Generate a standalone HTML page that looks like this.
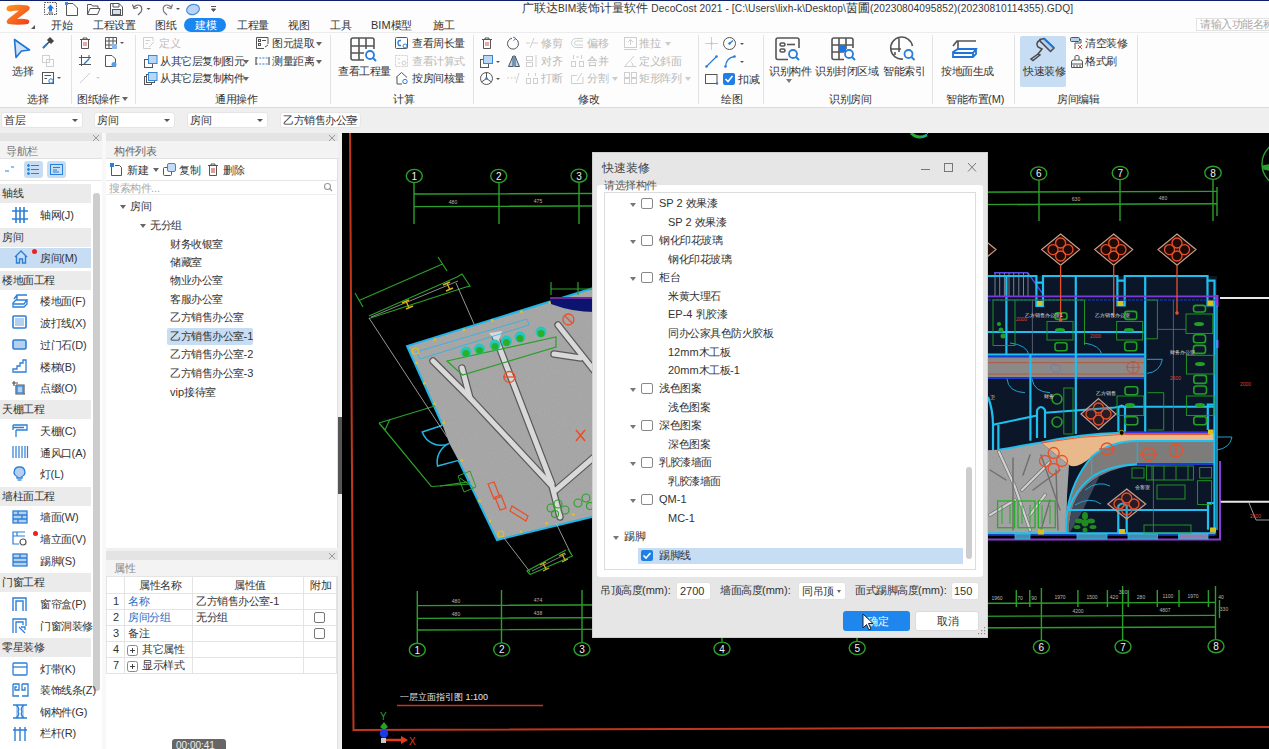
<!DOCTYPE html>
<html><head><meta charset="utf-8">
<style>
*{box-sizing:border-box}
html,body{margin:0;padding:0}
body{width:1269px;height:749px;overflow:hidden;position:relative;background:#efefef;font-family:"Liberation Sans",sans-serif;font-size:11px;color:#333}
.a{position:absolute}
.t{position:absolute;white-space:nowrap;font-size:11px;line-height:13px;color:#333}
.c{font-size:13px;letter-spacing:0.5px;-webkit-text-stroke:0.25px}
.g{color:#b9b9b9}
.sep{position:absolute;top:35px;width:1px;height:69px;background:#e3e3e3}
.cb{position:absolute;top:112px;height:16px;background:#fff;border-radius:3px;border:1px solid #e6e6e6}
.cb .arr{position:absolute;right:4px;top:6px;width:0;height:0;border-left:3px solid transparent;border-right:3px solid transparent;border-top:3px solid #555}
.hdr{position:absolute;height:8px;background:#e4e4e4}
.x{position:absolute;color:#999;font-size:10px;line-height:8px}
.sec{position:absolute;left:0;width:91px;height:19px;background:#ebebeb}
.tri{position:absolute;width:0;height:0;border-left:3px solid transparent;border-right:3px solid transparent;border-top:4px solid #666}
svg{position:absolute;overflow:visible}
body.cjk .c{font-size:10.5px!important;letter-spacing:-0.5px!important;-webkit-text-stroke:0!important}
body.cjk .ct{font-size:12px!important;letter-spacing:0!important}
body.cjk .cti{font-size:11.5px!important;letter-spacing:0!important}
</style></head><body>

<!-- title bar + tabs -->
<div class="a" style="left:0;top:0;width:1269px;height:32px;background:#fdfdfd"></div>
<div class="a" style="left:0;top:0;width:1269px;height:1px;background:#0f1f6a"></div>
<div class="t" style="left:522px;top:2px;font-size:10.2px;letter-spacing:0.08px;color:#3a3a3a"><span class="c cti" style="font-size:12.5px">广联达</span>BIM<span class="c cti" style="font-size:12.5px">装饰计量软件</span> DecoCost 2021 - [C:\Users\lixh-k\Desktop\<span class="c cti" style="font-size:12.5px">茵圃</span>(20230804095852)(20230810114355).GDQ]</div>
<div class="a" style="left:1196px;top:18px;width:80px;height:13px;border:1px solid #e2e2e2;background:#fff"></div>
<div class="t c" style="left:1200px;top:18px;color:#a8a8a8">请输入功能名称</div>

<!-- tabs -->
<div class="a" style="left:184px;top:18px;width:42px;height:14px;border-radius:7px;background:#1a86f0"></div>
<div class="t c" style="left:51px;top:19px">开始</div>
<div class="t c" style="left:93px;top:19px">工程设置</div>
<div class="t c" style="left:155px;top:19px">图纸</div>
<div class="t c" style="left:195px;top:19px;color:#fff">建模</div>
<div class="t c" style="left:237px;top:19px">工程量</div>
<div class="t c" style="left:288px;top:19px">视图</div>
<div class="t c" style="left:330px;top:19px">工具</div>
<div class="t" style="left:371px;top:19px">BIM<span class="c">模型</span></div>
<div class="t c" style="left:433px;top:19px">施工</div>

<!-- ribbon -->
<div class="a" style="left:0;top:32px;width:1269px;height:76px;background:#fdfdfd;border-top:1px solid #ececec;border-bottom:1px solid #dcdcdc"></div>

<!-- logo & quick access -->
<svg style="left:5px;top:3px" width="27" height="23" viewBox="0 0 27 23"><defs><linearGradient id="lg" x1="0" y1="0" x2="1" y2="1"><stop offset="0" stop-color="#ff9a20"/><stop offset="1" stop-color="#f03a1a"/></linearGradient></defs><path d="M4 2.5 Q13 1 22.5 2.5 Q26.5 4 23.5 7.5 L12 16 Q18 15.5 22.5 16.5 Q26 18 23 21 Q13 22.5 3.5 21 Q0 19.5 3 16 L14 7.5 Q9 7.5 5 8.5 Q1 8 1.5 5 Q2 3 4 2.5Z" fill="url(#lg)"/></svg>
<svg style="left:31px;top:25px" width="4" height="4"><path d="M4 0V4H0Z" fill="#555"/></svg>
<svg style="left:44px;top:2px" width="175" height="14" viewBox="0 0 175 14" fill="none" stroke="#555" stroke-width="1">
<rect x="0.5" y="0.5" width="12" height="12" stroke-dasharray="1.5 1"/><path d="M6.5 2.5 L3 6.5 H5 V9.5 H8 V6.5 H10Z" fill="#1a7ae6" stroke="none"/><path d="M4 11 H9" stroke="#555"/>
<path d="M22.5 1.5 H29 L33.5 6 V13.5 H22.5Z"/><rect x="21" y="0" width="3" height="3" fill="#3b8de0" stroke="none"/>
<path d="M43.5 4.5 V12.5 H53.5 L56 6.5 H46 L43.5 12.5 M43.5 4.5 V2.5 H47.5 L48.5 4 H54 V6.5"/>
<path d="M66.5 1.5 H75 L78.5 5 V13.5 H66.5Z"/><rect x="68.5" y="7.5" width="8" height="5" fill="#cfe3f7"/><path d="M69 1.5 V5 H75 V1.5"/>
<path d="M90 5 Q93 2 96 3.5 Q99 5.5 97 10 L94 13" stroke="#666" stroke-width="1.2"/><path d="M88.5 2.5 L90 6.5 L94 5.5" stroke="#666" stroke-width="1.2"/><path d="M102.5 6 H106.5 L104.5 8Z" fill="#555" stroke="none"/>
<path d="M127 5 Q124 2 121 3.5 Q118 5.5 120 10 L123 13" stroke="#777" stroke-width="1.2"/><path d="M128.5 2.5 L127 6.5 L123 5.5" stroke="#777" stroke-width="1.2"/><path d="M132 6 H136 L134 8Z" fill="#555" stroke="none"/>
<ellipse cx="149" cy="7.5" rx="6.5" ry="5" transform="rotate(-15 149 7.5)" fill="#b8d3f3" stroke="#4b8fdc" stroke-width="1.2"/>
<path d="M167 4.5 H172 M167.5 7 H171.5 L169.5 9.5Z" stroke="#555" fill="#555"/>
</svg>

<!-- ribbon group: 选择 -->
<svg style="left:13px;top:38px" width="18" height="21" viewBox="0 0 18 21"><path d="M1.5 1.5 L16.5 12 L8.5 13 L3 19.5Z" fill="#cfe3f8" stroke="#1f74d6" stroke-width="1.6" stroke-linejoin="round"/></svg>
<div class="t c" style="left:12px;top:65px">选择</div>
<svg style="left:42px;top:37px" width="12" height="12" viewBox="0 0 12 12"><path d="M1 11 L7 5 M6 3 L9 6 M8 1 L11 4 L9 6 L6 3Z" stroke="#444" stroke-width="1.5" fill="#444"/><path d="M1 11 L5 7" stroke="#2b7fd8" stroke-width="2"/></svg>
<svg style="left:42px;top:55px" width="12" height="12" viewBox="0 0 12 12" fill="none" stroke="#d0d0d0"><rect x="0.5" y="0.5" width="7" height="7"/><rect x="4.5" y="4.5" width="7" height="7"/></svg>
<svg style="left:42px;top:72px" width="20" height="12" viewBox="0 0 20 12" fill="none" stroke="#555"><rect x="0.5" y="0.5" width="11" height="11"/><path d="M2.5 3.5 H9 M2.5 6.5 H5"/><circle cx="9" cy="9" r="2.2" stroke="#2b7fd8"/><path d="M15 5 H19 L17 7Z" fill="#555" stroke="none"/></svg>
<div class="t c" style="left:27px;top:93px">选择</div>
<div class="sep" style="left:71px"></div>

<!-- 图纸操作 -->
<svg style="left:79px;top:37px" width="12" height="12" viewBox="0 0 12 12" fill="none" stroke="#555"><path d="M1 2.5 H11 M4 2.5 V1 H8 V2.5 M2.5 2.5 V11.5 H9.5 V2.5"/><path d="M5 5 V9 M7 5 V9" stroke="#d9534f"/></svg>
<svg style="left:105px;top:37px" width="20" height="12" viewBox="0 0 20 12" fill="none" stroke="#555"><path d="M0.5 0.5 H11.5 V11.5 H0.5Z M4 0.5 V11.5 M8 0.5 V11.5 M0.5 4 H11.5 M0.5 8 H11.5"/><rect x="7" y="7" width="5" height="5" fill="#8ab6e8" stroke="none"/><path d="M15 5 H19 L17 7Z" fill="#555" stroke="none"/></svg>
<svg style="left:79px;top:55px" width="13" height="12" viewBox="0 0 13 12" fill="none" stroke="#555"><path d="M2.5 0 V11 M0 2.5 H12 M0 9.5 H12 M10 0 V4"/><path d="M5 9 L10 4" stroke="#2b7fd8" stroke-width="1.5"/></svg>
<svg style="left:105px;top:55px" width="12" height="12" viewBox="0 0 12 12" fill="none" stroke="#555"><path d="M0.5 0.5 H7 L10.5 4 V11.5 H0.5Z"/><circle cx="9" cy="9.5" r="2.5" fill="#5a9de6" stroke="none"/></svg>
<svg style="left:79px;top:72px" width="24" height="12" viewBox="0 0 24 12" fill="none" stroke="#cfcfcf"><path d="M1 11 L11 1"/><path d="M17 5 H21 L19 7Z" fill="#ccc" stroke="none"/></svg>
<div class="t c" style="left:77px;top:93px">图纸操作</div>
<div class="tri" style="left:122px;top:97px"></div>
<div class="sep" style="left:135px"></div>

<!-- 通用操作 -->
<svg style="left:143px;top:37px" width="13" height="12" viewBox="0 0 13 12" fill="none" stroke="#cfcfcf"><path d="M0.5 0.5 H10 V4 M0.5 0.5 V11.5 H8 M2.5 3.5 H7 M2.5 6.5 H5 M6 10 L11 5"/></svg>
<div class="t c g" style="left:159px;top:37px">定义</div>
<svg style="left:144px;top:55px" width="14" height="13" viewBox="0 0 14 13" fill="none" stroke="#555"><rect x="0.5" y="4.5" width="8" height="8"/><rect x="4.5" y="0.5" width="8.5" height="8" fill="#b9d7f6" stroke="#3a86d8"/></svg>
<div class="t c" style="left:160px;top:55px">从其它层复制图元</div>
<div class="tri" style="left:243px;top:60px"></div>
<svg style="left:144px;top:72px" width="14" height="13" viewBox="0 0 14 13" fill="none" stroke="#555"><rect x="0.5" y="4.5" width="7" height="8"/><rect x="2.5" y="2.5" width="8" height="8" fill="#fff"/><rect x="4.5" y="0.5" width="8.5" height="8" fill="#b9d7f6" stroke="#3a86d8"/></svg>
<div class="t c" style="left:160px;top:72px">从其它层复制构件</div>
<div class="tri" style="left:243px;top:77px"></div>
<svg style="left:256px;top:37px" width="13" height="12" viewBox="0 0 13 12" fill="none" stroke="#555"><path d="M0.5 0.5 H12 V7 M0.5 0.5 V11.5 H8"/><rect x="2.5" y="2.5" width="2" height="2"/><rect x="2.5" y="6.5" width="2" height="2"/><path d="M6 3.5 H10 M9 10 L12 8"/></svg>
<div class="t c" style="left:272px;top:37px">图元提取</div>
<div class="tri" style="left:316px;top:42px"></div>
<svg style="left:256px;top:57px" width="14" height="8" viewBox="0 0 14 8" fill="none" stroke="#3a86d8" stroke-width="1.2"><path d="M0 1 H13 M0 7 H13" stroke-dasharray="2 1.2"/><path d="M0 0 V8 M13 0 V8" stroke="#555"/></svg>
<div class="t c" style="left:272px;top:55px">测量距离</div>
<div class="tri" style="left:316px;top:60px"></div>
<div class="t c" style="left:215px;top:93px">通用操作</div>
<div class="sep" style="left:330px"></div>

<!-- 计算 -->
<svg style="left:350px;top:37px" width="28" height="24" viewBox="0 0 28 24" fill="none" stroke="#555" stroke-width="1.6"><path d="M1 3 Q1 1 3 1 H22 Q24 1 24 3 V12 M1 3 V21 Q1 23 3 23 H14 M9 1 V23 M16 1 V12 M1 9 H24 M1 16 H14"/><circle cx="20" cy="18" r="4" stroke="#2b7fd8" stroke-width="1.8"/><path d="M23 21 L26 24" stroke="#2b7fd8" stroke-width="2"/></svg>
<div class="t c" style="left:338px;top:65px">查看工程量</div>
<svg style="left:395px;top:37px" width="14" height="13" viewBox="0 0 14 13" fill="none" stroke="#555"><rect x="0.5" y="0.5" width="12" height="11" rx="1"/><path d="M6 3.5 Q3 3 3 6 Q3 9 6 8.5" stroke="#2b7fd8" stroke-width="1.4"/><circle cx="10" cy="9" r="2" fill="#fff" stroke="#2b7fd8"/></svg>
<div class="t c" style="left:412px;top:37px">查看周长量</div>
<svg style="left:395px;top:55px" width="14" height="13" viewBox="0 0 14 13" fill="none" stroke="#cfcfcf"><rect x="0.5" y="0.5" width="12" height="11" stroke-dasharray="2 1"/><path d="M3 4 H5 M3 8 H5"/><circle cx="9" cy="8" r="2"/></svg>
<div class="t c g" style="left:412px;top:55px">查看计算式</div>
<svg style="left:395px;top:72px" width="14" height="13" viewBox="0 0 14 13" fill="none" stroke="#555"><path d="M1 5.5 L6.5 0.5 L12 5.5 M2 5 V12 H7"/><circle cx="10" cy="9.5" r="2.2" fill="#fff" stroke="#2b7fd8"/></svg>
<div class="t c" style="left:412px;top:72px">按房间核量</div>
<div class="t c" style="left:393px;top:93px">计算</div>
<div class="sep" style="left:473px"></div>

<!-- 修改 -->
<svg style="left:481px;top:37px" width="12" height="12" viewBox="0 0 12 12" fill="none" stroke="#555"><path d="M1 2.5 H11 M4 2.5 V1 H8 V2.5 M2.5 2.5 V11.5 H9.5 V2.5"/><path d="M5 5 V9 M7 5 V9" stroke="#d9534f"/></svg>
<svg style="left:507px;top:37px" width="13" height="13" viewBox="0 0 13 13" fill="none" stroke="#555"><path d="M9 2 A5.5 5.5 0 1 1 5 1.2"/><path d="M6 0 L9 1.5 L6.5 3.5" stroke="#2b7fd8"/></svg>
<svg style="left:526px;top:37px" width="12" height="12" viewBox="0 0 12 12" fill="none" stroke="#cfcfcf"><path d="M0 6 H4 M6 6 H12 M8 1 L4 11"/></svg>
<div class="t c g" style="left:541px;top:37px">修剪</div>
<svg style="left:480px;top:55px" width="22" height="13" viewBox="0 0 22 13" fill="none" stroke="#555"><rect x="0.5" y="4.5" width="8" height="8"/><rect x="3.5" y="0.5" width="9" height="8" fill="#b9d7f6" stroke="#3a86d8"/><path d="M16 6 H20 L18 8Z" fill="#555" stroke="none"/></svg>
<svg style="left:508px;top:55px" width="12" height="12" viewBox="0 0 12 12" fill="none" stroke="#555"><path d="M5 1 L0.5 11.5 H5Z M7 1 L11.5 11.5 H7Z" fill="#b9d7f6"/><path d="M6 0 V12" stroke="#2b7fd8"/></svg>
<svg style="left:526px;top:55px" width="12" height="12" viewBox="0 0 12 12" fill="none" stroke="#cfcfcf"><rect x="0.5" y="1.5" width="6" height="4"/><rect x="0.5" y="7.5" width="6" height="4"/><path d="M10 0 V12"/></svg>
<div class="t c g" style="left:541px;top:55px">对齐</div>
<svg style="left:480px;top:72px" width="22" height="13" viewBox="0 0 22 13" fill="none" stroke="#555"><circle cx="6.5" cy="6.5" r="6"/><path d="M6.5 6.5 V0.5 M6.5 6.5 L1.5 10 M6.5 6.5 L11.5 10" stroke="#555"/><circle cx="6.5" cy="6.5" r="1.3" fill="#2b7fd8" stroke="none"/><path d="M16 6 H20 L18 8Z" fill="#555" stroke="none"/></svg>
<svg style="left:507px;top:72px" width="13" height="12" viewBox="0 0 13 12" fill="none" stroke="#cfcfcf"><path d="M0 6 H2 M3.5 6 H5.5 M7 6 H9 M12 1 L9 11"/></svg>
<svg style="left:526px;top:72px" width="12" height="12" viewBox="0 0 12 12" fill="none" stroke="#cfcfcf"><rect x="0.5" y="6.5" width="4" height="5"/><rect x="7.5" y="6.5" width="4" height="5"/><path d="M2.5 1 V4 M9.5 1 V4"/></svg>
<div class="t c g" style="left:541px;top:72px">打断</div>
<svg style="left:571px;top:37px" width="13" height="12" viewBox="0 0 13 12" fill="none" stroke="#cfcfcf"><path d="M12 1.5 H5 A4.5 4.5 0 0 0 5 10.5 H12 M12 4 H5.5 A2 2 0 0 0 5.5 8 H12"/></svg>
<div class="t c g" style="left:587px;top:37px">偏移</div>
<svg style="left:571px;top:55px" width="13" height="12" viewBox="0 0 13 12" fill="none" stroke="#cfcfcf"><rect x="0.5" y="6.5" width="4" height="5"/><rect x="8.5" y="6.5" width="4" height="5"/><path d="M2.5 0 V4 M10.5 0 V4 M5 2 H8"/></svg>
<div class="t c g" style="left:587px;top:55px">合并</div>
<svg style="left:571px;top:72px" width="13" height="12" viewBox="0 0 13 12" fill="none" stroke="#cfcfcf"><path d="M12 5 V11.5 H0.5 V3.5 H6 M6 9 L11 1"/></svg>
<div class="t c g" style="left:587px;top:72px">分割</div>
<div class="tri" style="left:612px;top:77px;border-top-color:#ccc"></div>
<svg style="left:624px;top:37px" width="13" height="13" viewBox="0 0 13 13" fill="none" stroke="#cfcfcf"><rect x="0.5" y="0.5" width="12" height="10"/><path d="M6.5 8 V2.5 M4 5 L6.5 2.5 L9 5 M0 12.5 H13"/></svg>
<div class="t c g" style="left:639px;top:37px">推拉</div>
<div class="tri" style="left:665px;top:42px;border-top-color:#ccc"></div>
<svg style="left:624px;top:55px" width="13" height="12" viewBox="0 0 13 12" fill="none" stroke="#cfcfcf"><path d="M0.5 11.5 H12.5 M0.5 11.5 L10 1 M9 11 Q9 8 7 7"/></svg>
<div class="t c g" style="left:639px;top:55px">定义斜面</div>
<svg style="left:624px;top:72px" width="13" height="12" viewBox="0 0 13 12" fill="none" stroke="#cfcfcf"><rect x="0.5" y="0.5" width="5" height="5"/><rect x="7.5" y="0.5" width="5" height="5"/><rect x="0.5" y="6.5" width="5" height="5"/><rect x="7.5" y="6.5" width="5" height="5"/></svg>
<div class="t c g" style="left:639px;top:72px">矩形阵列</div>
<div class="tri" style="left:685px;top:77px;border-top-color:#ccc"></div>
<div class="t c" style="left:578px;top:93px">修改</div>
<div class="sep" style="left:698px"></div>

<!-- 绘图 -->
<svg style="left:705px;top:37px" width="13" height="13" viewBox="0 0 13 13" fill="none" stroke="#d0d0d0"><path d="M6.5 0 V13 M0 6.5 H13"/><circle cx="6.5" cy="6.5" r="1" fill="#bbb"/></svg>
<svg style="left:723px;top:37px" width="24" height="13" viewBox="0 0 24 13" fill="none" stroke="#555"><circle cx="6.5" cy="6.5" r="6"/><path d="M6.5 6.5 L10 3.5" stroke="#2b7fd8" stroke-width="1.4"/><circle cx="6.5" cy="6.5" r="1.2" fill="#2b7fd8" stroke="none"/><path d="M17 6 H21 L19 8Z" fill="#555" stroke="none"/></svg>
<svg style="left:705px;top:55px" width="13" height="13" viewBox="0 0 13 13" fill="none" stroke="#555"><path d="M1.5 11.5 L11.5 1.5" stroke="#2b7fd8" stroke-width="1.3"/><circle cx="1.5" cy="11.5" r="1.3" fill="#2b7fd8" stroke="none"/><circle cx="11.5" cy="1.5" r="1.3" fill="#2b7fd8" stroke="none"/></svg>
<svg style="left:724px;top:55px" width="24" height="13" viewBox="0 0 24 13" fill="none" stroke="#555"><path d="M1.5 11.5 Q2 3 10.5 1.5" stroke="#2b7fd8" stroke-width="1.3"/><circle cx="1.5" cy="11.5" r="1.3" fill="#2b7fd8" stroke="none"/><circle cx="10.5" cy="1.5" r="1.3" fill="#2b7fd8" stroke="none"/><path d="M16 6 H20 L18 8Z" fill="#555" stroke="none"/></svg>
<svg style="left:705px;top:74px" width="13" height="11" viewBox="0 0 13 11" fill="none" stroke="#555"><rect x="0.5" y="0.5" width="11.5" height="9"/><circle cx="12" cy="9.5" r="1.2" fill="#2b7fd8" stroke="none"/></svg>
<svg style="left:723px;top:73px" width="12" height="12" viewBox="0 0 12 12"><rect x="0" y="0" width="12" height="12" rx="2" fill="#1f7fe5"/><path d="M2.5 6 L5 8.5 L9.5 3" stroke="#fff" stroke-width="1.6" fill="none"/></svg>
<div class="t c" style="left:738px;top:73px">扣减</div>
<div class="t c" style="left:721px;top:93px">绘图</div>
<div class="sep" style="left:763px"></div>

<!-- 识别房间 -->
<svg style="left:775px;top:37px" width="26" height="24" viewBox="0 0 26 24" fill="none" stroke="#555" stroke-width="1.6"><path d="M13 22.5 H3 Q1 22.5 1 20.5 V3 Q1 1 3 1 H22 Q24 1 24 3 V11"/><rect x="5" y="6" width="5" height="3" rx="1.5"/><rect x="5" y="12" width="5" height="3" rx="1.5"/><path d="M12 7.5 H20"/><circle cx="18" cy="17" r="4" stroke="#2b7fd8" stroke-width="1.8"/><path d="M21 20 L24 23" stroke="#2b7fd8" stroke-width="2"/></svg>
<div class="t c" style="left:769px;top:65px">识别构件</div>
<div class="tri" style="left:786px;top:79px;border-top-color:#777"></div>
<svg style="left:831px;top:37px" width="26" height="24" viewBox="0 0 26 24" fill="none" stroke="#555" stroke-width="1.6"><path d="M13 22.5 H3 Q1 22.5 1 20.5 V3 Q1 1 3 1 H20 Q22 1 22 3 V11 M8 1 V22.5 M15 1 V12 M1 8 H22 M1 15 H13"/><rect x="8" y="8" width="7" height="7" fill="#1877e6" stroke="none"/><circle cx="18" cy="17" r="4" stroke="#2b7fd8" stroke-width="1.8"/><path d="M21 20 L24 23" stroke="#2b7fd8" stroke-width="2"/></svg>
<div class="t c" style="left:815px;top:65px">识别封闭区域</div>
<svg style="left:890px;top:37px" width="26" height="24" viewBox="0 0 26 24" fill="none" stroke="#555" stroke-width="1.6"><path d="M13 22 A11 11 0 1 1 22.5 9 M1 12 H11 M9 1.5 V15 M5 15 V18"/><circle cx="18.5" cy="17" r="4" stroke="#2b7fd8" stroke-width="1.8"/><path d="M21.5 20 L24.5 23" stroke="#2b7fd8" stroke-width="2"/></svg>
<div class="t c" style="left:883px;top:65px">智能索引</div>
<div class="t c" style="left:829px;top:93px">识别房间</div>
<div class="sep" style="left:932px"></div>

<!-- 智能布置 -->
<svg style="left:952px;top:39px" width="26" height="21" viewBox="0 0 26 21" fill="none" stroke="#555" stroke-width="1.6"><path d="M1 7 L5 2 H24 M6 2 V11"/><path d="M1 13 L6 10 H24 L21 14 H1Z M1 13 V18 H21 L24 15 V10 M21 14 V18" stroke="#1f74d6" stroke-width="1.8" fill="#fff"/></svg>
<div class="t c" style="left:941px;top:65px">按地面生成</div>
<div class="t" style="left:946px;top:93px"><span class="c">智能布置</span>(M)</div>
<div class="sep" style="left:1014px"></div>

<!-- 房间编辑 -->
<div class="a" style="left:1020px;top:36px;width:46px;height:51px;background:#c7ddf4;border-radius:2px"></div>
<svg style="left:1029px;top:38px" width="26" height="23" viewBox="0 0 26 23" fill="none" stroke="#4a4a4a" stroke-width="1.5"><path d="M11 1.5 L15 0.5 L25 10 L21.5 13.5 L11.5 3.5Z" fill="#b5cfee"/><path d="M15 0.5 L25 10" stroke="#1f74d6" stroke-width="2"/><path d="M11 2 Q6 5 9 9 L13 11 L9 16"/><path d="M9 16 L2 21 L4 22.5 L11 17Z" fill="#b5cfee"/></svg>
<div class="t c" style="left:1023px;top:65px">快速装修</div>
<svg style="left:1070px;top:37px" width="14" height="13" viewBox="0 0 14 13" fill="none" stroke="#555"><rect x="0.5" y="0.5" width="9" height="4" rx="1" fill="#b5cfee"/><path d="M9.5 2.5 H11 V6 H5 V12"/><path d="M8 8 L12 12 M12 8 L8 12" stroke="#e0413a"/></svg>
<div class="t c" style="left:1085px;top:37px">清空装修</div>
<svg style="left:1070px;top:55px" width="14" height="13" viewBox="0 0 14 13" fill="none" stroke="#555"><path d="M5 5 V1.5 Q5 0.5 7 0.5 Q9 0.5 9 1.5 V5 M1.5 7 Q1.5 5 3.5 5 H10.5 Q12.5 5 12.5 7 V12.5 H1.5Z M1.5 9 H12.5 M4 10 V12.5 M7 10 V12.5 M10 10 V12.5"/></svg>
<div class="t c" style="left:1085px;top:55px">格式刷</div>
<div class="t c" style="left:1057px;top:93px">房间编辑</div>
<div class="sep" style="left:1137px"></div>

<!-- combos row -->
<div class="cb" style="left:1px;width:82px"><div class="t c" style="left:2px;top:1px">首层</div><div class="arr"></div></div>
<div class="cb" style="left:94px;width:81px"><div class="t c" style="left:2px;top:1px">房间</div><div class="arr"></div></div>
<div class="cb" style="left:187px;width:81px"><div class="t c" style="left:2px;top:1px">房间</div><div class="arr"></div></div>
<div class="cb" style="left:280px;width:81px"><div class="t c" style="left:2px;top:1px">乙方销售办公室</div><div class="arr" style="right:2px"></div></div>

<!-- NAV PANEL -->
<div class="a" style="left:102px;top:133px;width:5px;height:616px;background:#f8f8f8"></div>
<div class="a" style="left:0;top:133px;width:102px;height:616px;background:#fff"></div>
<div class="hdr" style="left:0;top:133px;width:102px"></div>
<svg style="left:93px;top:135px" width="6" height="6" viewBox="0 0 6 6" stroke="#9a9a9a"><path d="M0 0 L6 6 M6 0 L0 6"/></svg>
<div class="a" style="left:0;top:141px;width:102px;height:18px;background:#f3f3f3;border-bottom:1px solid #e2e2e2"></div>
<div class="t c" style="left:6px;top:145px;color:#777">导航栏</div>
<svg style="left:5px;top:166px" width="10" height="6" viewBox="0 0 10 6" stroke="#2b7fd8"><path d="M0 5 H4 M6 1 H9"/></svg>
<div class="a" style="left:24px;top:161px;width:19px;height:17px;background:#c7ddf4;border-radius:3px"></div>
<svg style="left:27px;top:164px" width="13" height="11" viewBox="0 0 13 11" stroke="#2b7fd8" fill="#2b7fd8"><circle cx="1.5" cy="1.5" r="1" /><circle cx="1.5" cy="5.5" r="1"/><circle cx="1.5" cy="9.5" r="1"/><path d="M4 1.5 H12 M4 5.5 H12 M4 9.5 H12" stroke-width="1.2"/></svg>
<div class="a" style="left:47px;top:161px;width:19px;height:17px;background:#c7ddf4;border-radius:3px"></div>
<svg style="left:50px;top:164px" width="13" height="11" viewBox="0 0 13 11" fill="none" stroke="#2b7fd8"><rect x="0.5" y="0.5" width="12" height="10"/><path d="M3 3.5 H10 M3 6 H7 M3 8 H9"/></svg>
<div class="a" style="left:0;top:180px;width:102px;height:1px;background:#e6e6e6"></div>
<div class="a" style="left:93px;top:193px;width:7px;height:498px;background:#cdcdcd;border-radius:3px"></div>

<div class="sec" style="top:184px"></div><div class="t c" style="left:2px;top:187px">轴线</div>
<div class="t" style="left:40px;top:209px"><span class="c">轴网</span>(J)</div>
<div class="sec" style="top:228px"></div><div class="t c" style="left:2px;top:231px">房间</div>
<div class="a" style="left:0;top:248px;width:91px;height:20px;background:#c7ddf4"></div>
<div class="a" style="left:32px;top:249px;width:5px;height:5px;border-radius:50%;background:#f0201c"></div>
<div class="t" style="left:40px;top:252px"><span class="c">房间</span>(M)</div>
<div class="sec" style="top:271px"></div><div class="t c" style="left:2px;top:274px">楼地面工程</div>
<div class="t" style="left:40px;top:295px"><span class="c">楼地面</span>(F)</div>
<div class="t" style="left:40px;top:317px"><span class="c">波打线</span>(X)</div>
<div class="t" style="left:40px;top:339px"><span class="c">过门石</span>(D)</div>
<div class="t" style="left:40px;top:361px"><span class="c">楼梯</span>(B)</div>
<div class="t" style="left:40px;top:382px"><span class="c">点缀</span>(O)</div>
<div class="sec" style="top:400px"></div><div class="t c" style="left:2px;top:403px">天棚工程</div>
<div class="t" style="left:40px;top:425px"><span class="c">天棚</span>(C)</div>
<div class="t" style="left:40px;top:447px"><span class="c">通风口</span>(A)</div>
<div class="t" style="left:40px;top:468px"><span class="c">灯</span>(L)</div>
<div class="sec" style="top:487px"></div><div class="t c" style="left:2px;top:490px">墙柱面工程</div>
<div class="t" style="left:40px;top:511px"><span class="c">墙面</span>(W)</div>
<div class="a" style="left:33px;top:531px;width:5px;height:5px;border-radius:50%;background:#f0201c"></div>
<div class="t" style="left:40px;top:533px"><span class="c">墙立面</span>(V)</div>
<div class="t" style="left:40px;top:555px"><span class="c">踢脚</span>(S)</div>
<div class="sec" style="top:573px"></div><div class="t c" style="left:2px;top:576px">门窗工程</div>
<div class="t" style="left:40px;top:598px"><span class="c">窗帘盒</span>(P)</div>
<div class="t c" style="left:40px;top:620px">门窗洞装修</div>
<div class="sec" style="top:638px"></div><div class="t c" style="left:2px;top:641px">零星装修</div>
<div class="t" style="left:40px;top:663px"><span class="c">灯带</span>(K)</div>
<div class="t" style="left:40px;top:684px"><span class="c">装饰线条</span>(Z)</div>
<div class="t" style="left:40px;top:706px"><span class="c">钢构件</span>(G)</div>
<div class="t" style="left:40px;top:727px"><span class="c">栏杆</span>(R)</div>
<!-- nav icons -->
<svg style="left:12px;top:207px" width="16" height="16" viewBox="0 0 16 16" stroke="#2b7fd8" stroke-width="1.6" fill="none"><path d="M4 0 V16 M8 0 V16 M12 0 V16 M0 4 H16 M0 12 H16"/></svg>
<svg style="left:14px;top:250px" width="14" height="14" viewBox="0 0 14 14" stroke="#2b7fd8" stroke-width="1.4" fill="none"><path d="M1 7 L7 1 L13 7 M2.5 6 V13 H5.5 V9 H8.5 V13 H11.5 V6"/></svg>
<svg style="left:12px;top:294px" width="16" height="14" viewBox="0 0 16 14" stroke="#2b7fd8" stroke-width="1.3" fill="none"><path d="M2 5 L5 1 H15 M5 1 V6 M1 9 L4 6 H15 L12 10 H1Z M1 9 V13 H12 L15 10 V6"/></svg>
<svg style="left:12px;top:315px" width="15" height="14" viewBox="0 0 15 14" fill="none"><rect x="1" y="1" width="13" height="12" stroke="#2b7fd8" stroke-width="1.6" rx="1"/><rect x="3" y="3" width="9" height="8" fill="#b5cfee"/></svg>
<svg style="left:12px;top:339px" width="15" height="11" viewBox="0 0 15 11" fill="none"><rect x="1" y="1" width="13" height="9" stroke="#2b7fd8" stroke-width="1.6" rx="1.5" fill="#b5cfee"/></svg>
<svg style="left:12px;top:359px" width="15" height="14" viewBox="0 0 15 14" fill="none" stroke="#2b7fd8" stroke-width="1.3"><path d="M1 13 H14 V1 H11 V4 H8 V7 H5 V10 H1Z"/></svg>
<svg style="left:12px;top:380px" width="15" height="15" viewBox="0 0 15 15" fill="none" stroke="#555" stroke-width="1.2"><path d="M2 1 V6 M0 3 H6 M4 5 H12 V14 M4 5 V14 H13"/><rect x="5" y="6" width="6" height="7" fill="#b5cfee" stroke="#2b7fd8"/></svg>
<svg style="left:12px;top:423px" width="16" height="15" viewBox="0 0 16 15" fill="none" stroke="#2b7fd8" stroke-width="1.3"><path d="M1 2 H15 V7 H4 M1 2 V7 M4 7 V14 M1 4.5 H12" /></svg>
<svg style="left:12px;top:446px" width="16" height="12" viewBox="0 0 16 12" fill="none" stroke="#2b7fd8" stroke-width="1.2"><path d="M1 0 V12 M4 0 V12 M7 0 V12 M10 0 V12 M13 0 V12 M15.5 0 V12"/></svg>
<svg style="left:13px;top:466px" width="13" height="15" viewBox="0 0 13 15" fill="none" stroke="#2b7fd8" stroke-width="1.3"><path d="M6.5 1 A5 5 0 0 1 9 10.5 V12 H4 V10.5 A5 5 0 0 1 6.5 1Z" fill="#b5cfee"/><path d="M4.5 14 H8.5"/></svg>
<svg style="left:12px;top:510px" width="16" height="14" viewBox="0 0 16 14" fill="none" stroke="#2b7fd8" stroke-width="1.3"><rect x="1" y="1" width="14" height="12" fill="#b5cfee"/><path d="M1 5 H15 M1 9 H15 M6 1 V5 M10 5 V9 M6 9 V13"/></svg>
<svg style="left:12px;top:531px" width="16" height="15" viewBox="0 0 16 15" fill="none" stroke="#2b7fd8" stroke-width="1.2"><path d="M13 1 H1 V13 H7 M1 5 H13 M5 1 V5"/><circle cx="11" cy="11" r="3" stroke="#555"/></svg>
<svg style="left:12px;top:553px" width="16" height="14" viewBox="0 0 16 14" fill="none" stroke="#2b7fd8" stroke-width="1.3"><rect x="1" y="1" width="14" height="12" fill="#b5cfee"/><path d="M1 5 H15 M1 9 H15 M8 1 V5"/></svg>
<svg style="left:12px;top:597px" width="15" height="15" viewBox="0 0 15 15" fill="none" stroke="#2b7fd8" stroke-width="1.4"><path d="M1 14 V1 H14 V14 M4 14 V4 H11 V14"/></svg>
<svg style="left:12px;top:618px" width="16" height="16" viewBox="0 0 16 16" fill="none" stroke="#2b7fd8" stroke-width="1.3"><path d="M1 15 V1 H14 V8 M4 15 V4 H11 V7"/><path d="M7 9 L13 15 M9 9 H13 V12" stroke="#2b7fd8"/></svg>
<svg style="left:12px;top:662px" width="16" height="14" viewBox="0 0 16 14" fill="none" stroke="#2b7fd8" stroke-width="1.3"><rect x="1" y="1" width="14" height="12" rx="1"/><path d="M1 5 H15"/></svg>
<svg style="left:12px;top:683px" width="17" height="14" viewBox="0 0 17 14" fill="none" stroke="#2b7fd8" stroke-width="1.3"><path d="M1 1 H7 V7 H3 V4 H5 M1 1 V13 H7 M10 1 H16 V13 H10 M10 1 V7 H13 V4"/></svg>
<svg style="left:12px;top:704px" width="16" height="15" viewBox="0 0 16 15" fill="none" stroke="#2b7fd8" stroke-width="1.4"><path d="M1 1 H15 M1 14 H15 M4 1 Q8 4 6 7.5 Q8 11 4 14 M12 1 Q8 4 10 7.5 Q8 11 12 14" fill="#b5cfee"/></svg>
<svg style="left:12px;top:726px" width="16" height="15" viewBox="0 0 16 15" fill="none" stroke="#2b7fd8" stroke-width="1.4"><path d="M1 4 H15 M3 1 V15 M8 1 V15 M13 1 V15"/></svg>

<!-- COMPONENT LIST PANEL -->
<div class="a" style="left:106px;top:133px;width:232px;height:415px;background:#fff;border-right:1px solid #e0e0e0"></div>
<div class="hdr" style="left:106px;top:133px;width:232px"></div>
<svg style="left:329px;top:135px" width="6" height="6" viewBox="0 0 6 6" stroke="#9a9a9a"><path d="M0 0 L6 6 M6 0 L0 6"/></svg>
<div class="a" style="left:106px;top:141px;width:232px;height:18px;background:#f3f3f3;border-bottom:1px solid #e2e2e2"></div>
<div class="t c" style="left:114px;top:145px;color:#666">构件列表</div>
<svg style="left:110px;top:163px" width="13" height="13" viewBox="0 0 13 13" fill="none" stroke="#555"><path d="M1.5 2.5 V12.5 H11.5 V4.5 L9.5 2.5 H5"/><path d="M0 0 H4 V4 H0Z" fill="#2b7fd8" stroke="none"/></svg>
<div class="t c" style="left:127px;top:164px">新建</div>
<div class="tri" style="left:153px;top:168px"></div>
<svg style="left:163px;top:163px" width="13" height="13" viewBox="0 0 13 13" fill="none" stroke="#555"><rect x="0.5" y="4.5" width="8" height="8" rx="1"/><rect x="4.5" y="0.5" width="8" height="8" rx="1.5" fill="#c5dcf5" stroke="#3a86d8"/></svg>
<div class="t c" style="left:179px;top:164px">复制</div>
<svg style="left:207px;top:163px" width="12" height="13" viewBox="0 0 12 13" fill="none" stroke="#555"><path d="M1 2.5 H11 M4 2.5 V1 H8 V2.5 M2.5 2.5 V12.5 H9.5 V2.5"/><path d="M5 5 V10 M7 5 V10" stroke="#c0392b"/></svg>
<div class="t c" style="left:223px;top:164px">删除</div>
<div class="a" style="left:106px;top:180px;width:232px;height:1px;background:#e6e6e6"></div>
<div class="t" style="left:109px;top:182px;color:#aaa"><span class="c">搜索构件</span>...</div>
<svg style="left:324px;top:183px" width="8" height="9" viewBox="0 0 8 9" fill="none" stroke="#999" stroke-width="1.1"><circle cx="3.5" cy="3.5" r="3"/><path d="M5.7 5.7 L8 8"/></svg>
<div class="a" style="left:106px;top:194px;width:232px;height:1px;background:#ececec"></div>
<div class="tri" style="left:120px;top:205px"></div>
<div class="t c" style="left:130px;top:200px">房间</div>
<div class="tri" style="left:140px;top:224px"></div>
<div class="t c" style="left:150px;top:219px">无分组</div>
<div class="a" style="left:167px;top:328px;width:86px;height:17px;background:#c7ddf4;border-radius:2px"></div>
<div class="t c" style="left:170px;top:238px">财务收银室</div>
<div class="t c" style="left:170px;top:256px">储藏室</div>
<div class="t c" style="left:170px;top:274px">物业办公室</div>
<div class="t c" style="left:170px;top:293px">客服办公室</div>
<div class="t c" style="left:170px;top:311px">乙方销售办公室</div>
<div class="t" style="left:170px;top:330px"><span class="c">乙方销售办公室</span>-1</div>
<div class="t" style="left:170px;top:348px"><span class="c">乙方销售办公室</span>-2</div>
<div class="t" style="left:170px;top:367px"><span class="c">乙方销售办公室</span>-3</div>
<div class="t" style="left:170px;top:386px">vip<span class="c">接待室</span></div>

<!-- PROPERTIES PANEL -->
<div class="a" style="left:106px;top:551px;width:232px;height:198px;background:#fff;border-right:1px solid #e0e0e0"></div>
<div class="hdr" style="left:106px;top:551px;width:232px;height:9px"></div>
<svg style="left:329px;top:553px" width="6" height="6" viewBox="0 0 6 6" stroke="#9a9a9a"><path d="M0 0 L6 6 M6 0 L0 6"/></svg>
<div class="a" style="left:106px;top:560px;width:232px;height:16px;background:#f3f3f3"></div>
<div class="t c" style="left:114px;top:562px;color:#888">属性</div>
<svg style="left:106px;top:576px" width="232" height="100" viewBox="0 0 232 100" fill="none" stroke="#e4e4e4"><path d="M0.5 0.5 H231 M0.5 17.5 H231 M0.5 33.5 H231 M0.5 49.5 H231 M0.5 65.5 H231 M0.5 81.5 H231 M0.5 97.5 H231 M18.5 0 V98 M86.5 0 V98 M197.5 0 V98 M230.5 0 V98 M0.5 0 V98"/></svg>
<div class="t c" style="left:139px;top:579px">属性名称</div>
<div class="t c" style="left:234px;top:579px">属性值</div>
<div class="t c" style="left:310px;top:579px">附加</div>
<div class="t" style="left:113px;top:595px">1</div><div class="t c" style="left:128px;top:595px;color:#2b6cc4">名称</div><div class="t" style="left:196px;top:595px"><span class="c">乙方销售办公室</span>-1</div>
<div class="t" style="left:113px;top:611px">2</div><div class="t c" style="left:128px;top:611px;color:#2b6cc4">房间分组</div><div class="t c" style="left:196px;top:611px">无分组</div>
<div class="a" style="left:314px;top:612px;width:11px;height:11px;border:1px solid #777;border-radius:2px;background:#fff"></div>
<div class="t" style="left:113px;top:627px">3</div><div class="t c" style="left:128px;top:627px">备注</div>
<div class="a" style="left:314px;top:628px;width:11px;height:11px;border:1px solid #777;border-radius:2px;background:#fff"></div>
<div class="t" style="left:113px;top:643px">4</div><svg style="left:127px;top:645px" width="11" height="11" viewBox="0 0 11 11"><rect x="0.5" y="0.5" width="10" height="10" rx="2" fill="#fff" stroke="#888"/><path d="M3 5.5 H8 M5.5 3 V8" stroke="#444"/></svg><div class="t c" style="left:142px;top:643px">其它属性</div>
<div class="t" style="left:113px;top:659px">7</div><svg style="left:127px;top:661px" width="11" height="11" viewBox="0 0 11 11"><rect x="0.5" y="0.5" width="10" height="10" rx="2" fill="#fff" stroke="#888"/><path d="M3 5.5 H8 M5.5 3 V8" stroke="#444"/></svg><div class="t c" style="left:142px;top:659px">显示样式</div>

<!-- splitter -->
<div class="a" style="left:338px;top:417px;width:4px;height:77px;background:#555"></div>

<!-- CANVAS -->
<div class="a" style="left:342px;top:133px;width:927px;height:616px;background:#000;overflow:hidden">
<svg style="left:0;top:0" width="927" height="616" viewBox="342 133 927 616">
<!-- red frame -->
<path d="M350 133 L353.5 730 L1269 727" stroke="#c0381c" stroke-width="2" fill="none"/>
<!-- top grid -->
<g stroke="#2aa02a" stroke-width="1.4" fill="none">
<path d="M414 183 V224 M499 183 V224 M579 182 V224 M1039 180 V221 M1120 180 V221 M1213 180 V221 M1217 187 V216"/>
<path d="M414 194 L1217 191.4 M414 206.6 L1217 203.7"/>
<ellipse cx="414.3" cy="176" rx="8" ry="6.6"/><ellipse cx="498.7" cy="176" rx="8" ry="6.6"/><ellipse cx="579" cy="175.7" rx="8" ry="6.6"/>
<ellipse cx="1038.7" cy="173.5" rx="8" ry="6.6"/><ellipse cx="1120.2" cy="173" rx="8" ry="6.6"/><ellipse cx="1213" cy="172.8" rx="8.2" ry="6.6"/>
<circle cx="1285" cy="164" r="23"/>
<path d="M1263 166 L1269 165 L1269 170 L1264 169Z" fill="#2aa02a"/>
</g>
<g fill="#f4f4f4" font-family="Liberation Sans,sans-serif" font-size="10" text-anchor="middle">
<text x="414.3" y="179.8">1</text><text x="498.7" y="179.8">2</text><text x="579" y="179.5">3</text>
<text x="1038.7" y="177.3">6</text><text x="1120.2" y="176.8">7</text><text x="1213" y="176.6">8</text>
</g>
<g fill="#b8b8b8" font-size="5" text-anchor="middle">
<text x="453" y="204">480</text><text x="538" y="203">475</text><text x="1076" y="201">630</text><text x="1163" y="200">480</text>
</g>

<path d="M911 133 Q918 140 927 135" stroke="#20b030" stroke-width="3" fill="none"/><path d="M922 137 Q926 136 928 133" stroke="#30a0e0" stroke-width="1" fill="none"/>
<!-- bottom grid -->
<g stroke="#2aa02a" stroke-width="1.4" fill="none">
<path d="M417.3 591 V643 M501.5 590 V643 M582 590 V642.5 M722 637 V641.5 M857 637 V641 M1041.4 588 V640.5 M1122.6 586 V640 M1215.5 586 V639.5"/>
<path d="M417.3 605.6 L1215.5 602.4 M417.3 618.4 L1215.5 615.4 M417.3 630 L1215.5 627"/>
<path d="M1016.3 590 V607 M1029.8 590 V607 M1077.9 590 V607 M1107.4 590 V607 M1128.2 590 V607 M1157.3 590 V607 M1179 590 V607 M1208.4 590 V607 M1219.5 600 V618"/>
<ellipse cx="417.3" cy="649.8" rx="8" ry="6.6"/><ellipse cx="501.7" cy="649.5" rx="8" ry="6.6"/><ellipse cx="582" cy="649.2" rx="8" ry="6.6"/>
<ellipse cx="722" cy="648.7" rx="8" ry="6.6"/><ellipse cx="857.2" cy="648" rx="8" ry="6.6"/>
<ellipse cx="1041.4" cy="647" rx="8" ry="6.6"/><ellipse cx="1123" cy="646.7" rx="8" ry="6.6"/><ellipse cx="1216" cy="646.2" rx="8" ry="6.6"/>
</g>
<g fill="#f4f4f4" font-family="Liberation Sans,sans-serif" font-size="10" text-anchor="middle">
<text x="417.3" y="653.6">1</text><text x="501.7" y="653.3">2</text><text x="582" y="653">3</text><text x="722" y="652.5">4</text><text x="857.2" y="651.8">5</text>
<text x="1041.4" y="650.8">6</text><text x="1123" y="650.5">7</text><text x="1216" y="650">8</text>
</g>
<g fill="#b8b8b8" font-size="5" text-anchor="middle">
<text x="456" y="603">480</text><text x="538" y="602">474</text><text x="456" y="616">480</text><text x="538" y="615">438</text>
<text x="997" y="600">1960</text><text x="1020" y="600">70</text><text x="1034" y="600">90</text><text x="1060" y="599">1970</text><text x="1092" y="599">1500</text><text x="1114" y="599">420</text><text x="1141" y="599">280</text><text x="1168" y="598">1100</text><text x="1193" y="598">1970</text><text x="1221" y="599">40</text><text x="1078" y="613">4200</text><text x="1165" y="612">4807</text><text x="1224" y="611">330</text><text x="1123" y="594">300</text>
</g>

<!-- floor polygon (left) -->
<defs><filter id="nz" x="0" y="0" width="1" height="1"><feTurbulence type="fractalNoise" baseFrequency="0.9" numOctaves="1" seed="3" result="n"/><feColorMatrix type="matrix" values="0 0 0 0 0.5  0 0 0 0 0.5  0 0 0 0 0.5  0.9 0 0 0 -0.3" in="n" result="g"/><feComposite in="g" in2="SourceGraphic" operator="in"/></filter></defs>
<path d="M407 346 L600 286 L600 515 L497 540 L458.5 460.4 L449.4 443.4 L442.6 425.3Z" fill="#a4a4a4"/>
<path d="M407 346 L600 286 L600 515 L497 540 L458.5 460.4 L449.4 443.4 L442.6 425.3Z" fill="#a4a4a4" filter="url(#nz)" opacity="0.6"/>
<path d="M442.6 425.3 L407 346 L600 286 M600 515 L497 540 L458.5 460.4" stroke="#1fb6e8" stroke-width="2" fill="none"/>
<path d="M442.6 425.3 L422.2 432 A20 20 0 0 0 449.4 443.4 A20 20 0 0 0 437.6 466 L458.5 460.4" stroke="#1fb6e8" stroke-width="1.5" fill="none"/>
<path d="M379 423 L434.7 406 M379 423 L431.3 486.5 L470 484 M379 423 L385 430 L390 419" stroke="#2aa02a" stroke-width="1.2" fill="none"/>
<!-- tree branches -->
<g stroke="#5a5a5a" stroke-width="7.5" fill="none" stroke-linecap="round" stroke-linejoin="round">
<path d="M433 361 L470 398 L552 486 L560 517"/><path d="M462 368 L470 398"/>
<path d="M495 336 L552 484"/><path d="M556 490 L600 452"/><path d="M558 325 L600 378"/><path d="M554 354 L581 358"/>
</g>
<g stroke="#d9d9d9" stroke-width="5" fill="none" stroke-linecap="round" stroke-linejoin="round">
<path d="M433 361 L470 398 L552 486 L560 517"/><path d="M462 368 L470 398"/>
<path d="M495 336 L552 484"/><path d="M556 490 L600 452"/><path d="M558 325 L600 378"/><path d="M554 354 L581 358"/>
</g>
<path d="M489 333 L502 331 L498 344Z" fill="#d9d9d9"/>
<!-- shelf & stools -->
<path d="M416 352 L527 319 L529 325 L420 359Z" fill="none" stroke="#1fb6e8" stroke-width="1" opacity="0.75"/>
<path d="M447 361 L556 337 L556 347 L462.5 375Z" fill="none" stroke="#2aa02a" stroke-width="1.2"/>
<g fill="#20c8c0" stroke="#20c8c0" stroke-width="1">
<circle cx="466" cy="352" r="5"/><circle cx="479.5" cy="349" r="5"/><circle cx="495" cy="345" r="5"/><circle cx="506.5" cy="341" r="5"/><circle cx="520" cy="337" r="5"/><circle cx="541" cy="332" r="5"/>
</g>
<g fill="#28b028" stroke="none">
<circle cx="466" cy="353.5" r="3.5"/><circle cx="479.5" cy="350.5" r="3.5"/><circle cx="495" cy="346.5" r="3.5"/><circle cx="506.5" cy="342.5" r="3.5"/><circle cx="520" cy="338.5" r="3.5"/><circle cx="541" cy="333.5" r="3.5"/>
</g>
<g stroke="#e8502a" stroke-width="1.3" fill="none">
<circle cx="509.4" cy="377" r="5.5"/><path d="M503 377 H516"/>
<path d="M576 430 L585 441 M585 430 L576 441" stroke-width="1.6"/>
<path d="M488 484 L494 482 L500 497 L494 499Z M495 497 L501 495 L506 508 L500 510Z M510 511 L512 506 L528 516 L526 521Z"/>
<circle cx="568.4" cy="319.5" r="5.5"/><path d="M564.5 315.5 L572.5 323.5"/>
</g>
<g fill="#e0c020"><circle cx="415.4" cy="351" r="3" fill="none" stroke="#e0c020" stroke-width="1.2"/><circle cx="500.9" cy="534" r="3" fill="none" stroke="#e0c020" stroke-width="1.2"/>
<circle cx="416.5" cy="363" r="1.4"/><circle cx="424.4" cy="383.3" r="1.4"/><circle cx="434.7" cy="403.7" r="1.4"/><circle cx="443.7" cy="423" r="1.4"/><circle cx="461.9" cy="460.4" r="1.4"/><circle cx="479.5" cy="500.9" r="1.4"/><circle cx="490.2" cy="521" r="1.4"/><circle cx="521" cy="531.8" r="1.4"/><circle cx="546.8" cy="523.3" r="1.4"/><circle cx="573.5" cy="514.7" r="1.4"/><circle cx="435" cy="339.6" r="1.4"/><circle cx="463.9" cy="329.8" r="1.4"/><circle cx="492.2" cy="320.5" r="1.4"/><circle cx="521.4" cy="311.7" r="1.4"/><circle cx="550" cy="302.8" r="1.4"/></g>

<!-- building strip behind dialog top-left -->
<path d="M550 297 H600 V312 Q575 313 551 304Z" fill="#0c1470"/><path d="M550 298 H600" stroke="#d040c0" stroke-width="1"/>
<path d="M551 289 H600 M551 282 V295 M578 282 V295" stroke="#2aa02a" stroke-width="1.2"/>
<!-- slanted dimension top-left -->
<g stroke="#2aa02a" stroke-width="1.2" fill="none">
<path d="M359 300.5 L442.5 264 M355 293 L363 307 M438 257 L447 271"/>
<path d="M369 316 L457 277 M369 318.5 L466 287 M457 277 L462 274 L470 286 L466 287"/>
</g>
<path d="M371 317 L458 281" stroke="#b0b0b0" stroke-width="0.8"/>
<g stroke="#d4b020" stroke-width="1.4"><path d="M406 301 L409 308 M402 303 L409 300 M406 309 L413 306 M447 283 L450 290 M443 285 L450 282 M446 291 L453 288"/></g>
<path d="M369 318 L447 437 M456 283 L474 324 M504 538 L530 572 M556 523 L571 554" stroke="#bdbdbd" stroke-width="0.8" fill="none"/>
<path d="M530 574.5 L572.4 556 L568 549 M530 574.5 L527 571 L566 550" stroke="#2aa02a" stroke-width="1.2" fill="none"/>
<path d="M532 571 L566 554" stroke="#b0b0b0" stroke-width="0.7"/>
<g stroke="#d4b020" stroke-width="1.3"><path d="M543 563 L546 569 M540 565 L546 562 M543 571 L549 568 M562 554 L565 560 M559 556 L565 553 M562 562 L568 559"/></g>
<path d="M458 476 L470 471 L476 487 L464 492Z M460 478 L474 488" stroke="#2aa02a" stroke-width="1" fill="none"/>
<path d="M440 486 L470 481.6" stroke="#2aa02a" stroke-width="1.1"/>
<g stroke="#2aa02a" stroke-width="1.1" fill="none"><circle cx="551" cy="508" r="4"/><circle cx="558" cy="504" r="4"/><circle cx="565" cy="510" r="4"/><circle cx="555" cy="514" r="3.5"/><circle cx="578" cy="503" r="4"/><circle cx="586" cy="498" r="4"/><circle cx="590" cy="506" r="3.5"/></g>

<!-- BUILDING -->
<rect x="940" y="276" width="277" height="260" fill="#0b1729"/>
<!-- stair top-left -->
<path d="M994 272.7 H1027.7 L1042.4 293.4" stroke="#5a4ae8" stroke-width="1.4" fill="none"/>
<path d="M995 273 V296 M999.7 273 V296 M1004.4 273 V296 M1009 273 V296 M1013.7 273 V296 M1018.8 273 V296 M1023.5 273 V296 M1028 273 V296" stroke="#9a9aa8" stroke-width="0.8"/>
<!-- corridor -->
<rect x="940" y="357" width="204" height="20" fill="#8c8a88"/>
<path d="M940 356.5 H1144" stroke="#1a3ad0" stroke-width="2"/>
<path d="M940 362.7 H1144 M940 374 H1144" stroke="#c04a30" stroke-width="0.8"/>
<path d="M940 378 H1144" stroke="#1a3ad0" stroke-width="2"/>
<circle cx="1133" cy="367.4" r="6" stroke="#d04a30" stroke-width="1" fill="none"/><path d="M1133 361 V374 M1126 367.4 H1140" stroke="#d04a30" stroke-width="0.8"/>
<path d="M1052 364 Q1048 368 1054 372 Q1062 374 1060 366Z" stroke="#6a7ab0" stroke-width="0.8" fill="none"/>
<!-- tree floor bottom-left -->
<path d="M940 452 L999 449.8 Q1020 446 1041 442.5 L1069 465 Q1068 480 1067 496 L1066.3 534 L940 534Z" fill="#9f9f9f"/>
<path d="M940 452 L999 449.8 Q1020 446 1041 442.5 L1069 465 Q1068 480 1067 496 L1066.3 534 L940 534Z" fill="#9f9f9f" filter="url(#nz)" opacity="0.6"/>
<g stroke="#6a6a6a" stroke-width="3.4" fill="none" stroke-linecap="round">
<path d="M999 452 L1015 487 L1030 530 M990 515 L1015 500 M1022 490 L1050 462 M1030 515 L1045 495"/>
</g>
<g stroke="#d0d0d0" stroke-width="2.2" fill="none" stroke-linecap="round">
<path d="M999 452 L1015 487 L1030 530 M1022 490 L1050 462 M990 515 L1015 500 M1030 515 L1045 495"/>
</g>
<g stroke="#6e6e6e" stroke-width="1.4" fill="none" stroke-linecap="round">
<path d="M1013 458 L1013 530 M1006 480 L990 470 M1023 475 L1030 455 M1033 490 L1060 470 M1050 500 L1041 530 M1041 455 L1060 510 M1056 470 L1058 530"/>
</g>
<g stroke="#22b022" stroke-width="1.3" fill="none"><rect x="997.6" y="501" width="17" height="26.7"/><rect x="1018" y="501" width="17" height="26.7"/><rect x="1038.3" y="501" width="17" height="26.7"/><path d="M1002 505 V524 M1010 505 V524 M1022 505 V524 M1030 505 V524 M1042 505 V524 M1050 505 V524" stroke-width="1"/></g>
<!-- tan -->
<path d="M1041 442.5 Q1080 434 1121 432.8 L1215 432.8 L1215 441 L1137 441 Q1105 446 1091.6 456.8 Q1076 470 1069 465Z" fill="#e9b98c"/>
<!-- arc band -->
<path d="M1066.3 534 Q1064 490 1091.6 456.8 Q1110 441 1137 441 L1215 441 L1215 463.5 L1137 464.5 Q1100 470 1083 489 Q1069 505 1069 534Z" fill="#7e7c7a"/>
<path d="M1069 534 Q1069 505 1083 489 L1100 475 L1083 510 Z" fill="#3c4a5c"/>
<path d="M1066.3 534 Q1064 490 1091.6 456.8 Q1110 441 1137 441 L1215 441 M1069 508.7 Q1075 490 1091.6 477 Q1110 465 1137 464.5 L1215 463.5 M1067.7 510 H1208.8" stroke="#1fc0f0" stroke-width="1.8" fill="none"/>
<path d="M1091.6 457 V477 M1137.3 441 V464.5" stroke="#1fb0e0" stroke-width="1.2"/>
<path d="M1137 464 H1215" stroke="#1a3ad0" stroke-width="2"/>
<path d="M1075 505 Q1090 496 1101 504 M1085 490 Q1098 480 1110 486" stroke="#1fa0d0" stroke-width="1" fill="none"/>
<!-- rails -->
<path d="M993 424.8 L1037 415.4 M1045 412.7 L1115 407.4 L1118 406.7 H1214.5" stroke="#1fc0f0" stroke-width="2" fill="none"/>
<path d="M999 449.8 Q1020 446 1041 442.5 Q1080 434 1121 432.8 H1214.5" stroke="#1fc0f0" stroke-width="2" fill="none"/>
<path d="M1041 443 Q1080 436 1121 434.5 H1210" stroke="#e8502a" stroke-width="0.9" fill="none"/>
<path d="M1121 432.8 H1214.5" stroke="#3a3ae0" stroke-width="1.5"/>
<!-- walls -->
<g stroke="#1fc0f0" stroke-width="2.2" fill="none">
<path d="M940 276 H1036.4 V306 H1043 V276 H1117.4 V305.4 H1124.7 V276 H1207.5 V280.7 H1214.5 V533.3 H940"/>
<path d="M1036.4 282.7 H1043 M1117.4 280.7 H1124.7"/>
<path d="M940 332 H1143.4 M940 354.5 H1144"/>
<path d="M1006.4 276 V354 M1075.8 276 V434 M1030.4 354 V440.8 M1145.2 276 V431.4"/>
<path d="M1207.5 280.7 V305.4 H1214.5"/>
<path d="M1037 438 V410 Q1041 404 1045 410 V438 M1118.4 431.4 V408 Q1121.7 403 1125 408 V431.4 M1207.8 430 V404.7 H1214.5"/>
<path d="M993 424.8 V450 M998.4 424.8 V450 M988 397 Q993 410 993 425"/>
<path d="M1118.3 533.3 V506 Q1122.5 501 1126.7 506 V533.3 M1208 529.8 V503 H1215"/>
</g>
<path d="M940 296.3 H1215" stroke="#7a3ad8" stroke-width="1.8"/>
<path d="M940 300 H1215" stroke="#1a3ad0" stroke-width="1.2" stroke-dasharray="3 1"/>
<path d="M940 539.6 H1220 V461" stroke="#8a3ad8" stroke-width="2" fill="none"/>
<path d="M1217 295 V306.7 M1217 340 V348" stroke="#8a3ad8" stroke-width="3"/>
<path d="M1217 306 V530" stroke="#1fc0f0" stroke-width="1.4"/>
<path d="M940 535 H1215" stroke="#1a3ad0" stroke-width="1.5"/>
<g fill="#4a8ab0" stroke="#1fc0f0" stroke-width="0.8"><rect x="1015" y="534" width="15" height="5"/><rect x="1077" y="534" width="30" height="5"/><rect x="1128" y="534" width="29.6" height="5"/><rect x="1178.6" y="534" width="29.4" height="5" fill="#9a7aa8"/></g>
<!-- furniture green -->
<g stroke="#22a022" stroke-width="1.6" fill="none">
<rect x="1055" y="312.7" width="12" height="6.7" rx="2.5"/><rect x="1055" y="342.8" width="12" height="8" rx="2.5"/>
<rect x="1124.7" y="311.4" width="12" height="8" rx="2.5"/><rect x="1124.7" y="342" width="12" height="8.8" rx="2.5"/>
<rect x="1193.5" y="305.4" width="12" height="6.6" rx="2.5"/><rect x="1193.5" y="334.8" width="12" height="8" rx="2.5"/><rect x="1193.5" y="345.4" width="12" height="8" rx="2.5"/>
<rect x="1193.8" y="375.4" width="12.7" height="8" rx="2.5"/><rect x="1193.8" y="386" width="12.7" height="8" rx="2.5"/><rect x="1193.8" y="416.8" width="12.7" height="8" rx="2.5"/>
<rect x="1125" y="386.7" width="12.7" height="8" rx="2.5"/><rect x="1125" y="416.8" width="12.7" height="8" rx="2.5"/>
<circle cx="1057" cy="399" r="5"/><circle cx="1057" cy="422" r="5"/>
</g>
<g stroke="#22a022" stroke-width="0.9" fill="none">
<rect x="993" y="300" width="22" height="45.5"/><rect x="1047" y="321.4" width="26" height="18.6"/><rect x="1116.7" y="321.4" width="26" height="18.6"/><rect x="1186" y="314" width="26.8" height="19.4"/>
<rect x="1186.4" y="355.3" width="27.6" height="18.7"/><rect x="1186.4" y="396" width="27.6" height="19.4"/><rect x="1117" y="396" width="26.7" height="19.4"/>
<rect x="1063.8" y="388" width="9.2" height="46"/><path d="M1015 300 H1084.5 V345 M1146 300 H1157.4 V338.8 H1146 M1147.7 392.7 H1163.7 V430 H1147.7"/>
<rect x="1146.4" y="466" width="47" height="14"/><path d="M1152 466 V480 M1164 466 V480 M1176 466 V480 M1188 466 V480"/><rect x="1157" y="485" width="28" height="14"/><rect x="1197.6" y="480.7" width="14" height="23.8"/><rect x="1132" y="468" width="12" height="10"/><rect x="1199.7" y="467.4" width="11.9" height="10.6"/><rect x="1144" y="525" width="47" height="8"/>
</g>
<g fill="#22a022"><circle cx="1001" cy="330" r="2.5"/><circle cx="1003" cy="336" r="2.5"/><circle cx="999" cy="324" r="2"/><ellipse cx="1060" cy="330" rx="5" ry="2"/><ellipse cx="1129" cy="330" rx="5" ry="2"/><ellipse cx="1199" cy="324" rx="5" ry="2"/><ellipse cx="1200" cy="364" rx="5" ry="2"/><ellipse cx="1200" cy="405" rx="5" ry="2"/><ellipse cx="1130" cy="405" rx="5" ry="2"/>
</g>
<g fill="#228a22"><ellipse cx="1085" cy="516" rx="3" ry="4"/><ellipse cx="1079" cy="521" rx="4" ry="2.5"/><ellipse cx="1091" cy="521" rx="4" ry="2.5"/><ellipse cx="1085" cy="523" rx="3.5" ry="3.5"/><ellipse cx="1077" cy="527" rx="3.5" ry="2"/><ellipse cx="1093" cy="527" rx="3.5" ry="2"/><ellipse cx="1085" cy="530" rx="2.5" ry="2.5"/></g>
<path d="M1173.4 300 V431 M1153.4 466 V533 M1157.4 329.4 H1186 M1032.4 300 V354" stroke="#6a6e80" stroke-width="0.8"/>
<!-- door arcs -->
<path d="M1010 343 Q1027 345 1029 355 M1084 343 Q1100 345 1102 355 M1007 378.7 Q1008 392 1025 392.7 M1032 379 Q1034 392 1050 392.7 M1147 359.3 H1162.4 Q1160 372 1147 373.4 M1217 437 H1232 Q1230 448 1217 450" stroke="#1fa0d0" stroke-width="1" fill="none"/>
<!-- red lamps -->
<g stroke="#c8a090" stroke-width="1.2" fill="#b83a22" fill-opacity="0.18">
<path d="M1060.6 234 L1079.6 249.6 L1060.6 265.3 L1041.6 249.6Z M1113.7 234 L1132.7 249.6 L1113.7 265.3 L1094.7 249.6Z M1177 234 L1196 249.6 L1177 265.3 L1158 249.6Z M977 234 L996 249.6 L977 265.3 L958 249.6Z M1098.5 398.6 L1116 414 L1098.5 429.4 L1081 414Z M1126.7 489 L1145.7 504 L1126.7 519 L1107.8 504Z"/>
</g>
<g stroke="#e8502a" stroke-width="1.3" fill="none">
<circle cx="1060.6" cy="243" r="5"/><circle cx="1060.6" cy="256" r="5"/><circle cx="1053" cy="249.6" r="5"/><circle cx="1068" cy="249.6" r="5"/>
<circle cx="1113.7" cy="243" r="5"/><circle cx="1113.7" cy="256" r="5"/><circle cx="1106" cy="249.6" r="5"/><circle cx="1121" cy="249.6" r="5"/>
<circle cx="1177" cy="243" r="5"/><circle cx="1177" cy="256" r="5"/><circle cx="1169.5" cy="249.6" r="5"/><circle cx="1184.5" cy="249.6" r="5"/>
<circle cx="1098.5" cy="408" r="5"/><circle cx="1098.5" cy="420" r="5"/><circle cx="1091" cy="414" r="5"/><circle cx="1106" cy="414" r="5"/>
<circle cx="1126.7" cy="498" r="5"/><circle cx="1126.7" cy="510" r="5"/><circle cx="1119" cy="504" r="5"/><circle cx="1134" cy="504" r="5"/>
<path d="M1060.6 265 V320 M1113.7 265 V317 M1177 265 V313"/>
<circle cx="1053.7" cy="453" r="5.5"/><circle cx="1053.7" cy="469" r="5.5"/><circle cx="1045" cy="461" r="5.5"/><circle cx="1062" cy="461" r="5.5"/>
<circle cx="1107" cy="449" r="6"/><path d="M1099 449 H1115"/><circle cx="1176" cy="450.5" r="6.5"/><path d="M1176 443 V458"/><circle cx="1149" cy="454" r="6.5"/><path d="M1140 454 H1158"/>
</g>
<circle cx="1060.6" cy="320" r="1.8" fill="#e8502a"/><circle cx="1177" cy="313" r="1.8" fill="#e8502a"/>
<!-- white lines right -->
<path d="M1220 298 H1269 M1220.7 501.7 H1269" stroke="#e8e8e8" stroke-width="2"/>
<path d="M1249 503 L1256 520 H1269" stroke="#9a9a9a" stroke-width="1" fill="none"/>
<g fill="#e0e0e0" font-size="5"><text x="1025" y="317">乙方销售办公室1</text><text x="1095" y="317">乙方销售办公室</text><text x="1170" y="354">财务办公室</text><text x="1044" y="398">财务</text><text x="1096" y="395">乙方销售</text><text x="1135" y="489">会客室</text><text x="990" y="399">卫</text></g>
<g fill="#e04030" font-size="5"><text x="1016" y="321">2000</text><text x="1090" y="338">2000</text><text x="1240" y="386">2000</text><text x="1250" y="518">2600</text><text x="1170" y="380">2600</text></g>
<!-- yellow column marks -->
<g fill="#d8c020"><rect x="1037" y="301" width="5.5" height="5"/><rect x="1118" y="301" width="5.5" height="5"/><rect x="1208" y="300.5" width="5.5" height="5"/><rect x="1208" y="429.5" width="5.5" height="5"/><rect x="1038" y="529.5" width="6" height="5"/><rect x="1119" y="529" width="6" height="5"/><rect x="1210" y="527.5" width="6" height="5"/></g>
<circle cx="1121.7" cy="432.8" r="2.5" fill="#000" stroke="#d8c020" stroke-width="0.8"/>

<!-- title -->
<text x="400" y="700" fill="#e6e6e6" font-size="9">一层立面指引图 1:100</text>
<path d="M397 705.5 H543" stroke="#c0381c" stroke-width="1.5"/>
<!-- axis -->
<text x="380" y="720" fill="#2aa02a" font-size="10">Y</text>
<path d="M380 727 L384 722 L388 727 L384 730Z" fill="#2aa02a"/>
<circle cx="384" cy="733.5" r="4.2" fill="#1a3ae8"/>
<rect x="381" y="738" width="5" height="5" fill="#c8c8c8"/>
<path d="M386 740 H402" stroke="#e83a1a" stroke-width="2.5"/><path d="M401 736 L408 740 L401 744Z" fill="#e83a1a"/>
<text x="409" y="745" fill="#e83a1a" font-size="10">X</text>
</svg>
</div>
<!-- DIALOG -->
<div class="a" style="left:592px;top:152px;width:396px;height:486px;background:#e6e6e6;border:1px solid #d0d0d0"></div>
<div class="t c ct" style="left:602px;top:162px;color:#444;font-size:14px;letter-spacing:1.3px">快速装修</div>
<svg style="left:921px;top:163px" width="56" height="10" viewBox="0 0 56 10" fill="none" stroke="#777" stroke-width="1"><path d="M0 6.5 H9"/><rect x="23.5" y="0.5" width="8" height="8"/><path d="M47 0 L55 8.5 M55 0 L47 8.5"/></svg>
<div class="a" style="left:597px;top:185px;width:386px;height:392px;background:#fff;border-radius:3px"></div>
<div class="t c" style="left:604px;top:179px;color:#555">请选择构件</div>
<div class="a" style="left:604px;top:192px;width:372px;height:378px;border:1px solid #dcdcdc"></div>
<div class="a" style="left:966px;top:467px;width:6px;height:92px;background:#cdcdcd;border-radius:3px"></div>
<div class="a" style="left:638px;top:548px;width:325px;height:16px;background:#c7ddf4"></div>
<!-- tree rows -->
<div class="tri" style="left:630px;top:203px;border-top-color:#777"></div>
<div class="a" style="left:641px;top:198px;width:12px;height:11px;border:1px solid #888;border-radius:2px;background:#fff"></div>
<div class="t" style="left:659px;top:197px"><span>SP 2 </span><span class="c">效果漆</span></div>
<div class="t" style="left:668px;top:216px"><span>SP 2 </span><span class="c">效果漆</span></div>
<div class="tri" style="left:630px;top:240px;border-top-color:#777"></div>
<div class="a" style="left:641px;top:235px;width:12px;height:11px;border:1px solid #888;border-radius:2px;background:#fff"></div>
<div class="t c" style="left:659px;top:234px">钢化印花玻璃</div>
<div class="t c" style="left:668px;top:253px">钢化印花玻璃</div>
<div class="tri" style="left:630px;top:277px;border-top-color:#777"></div>
<div class="a" style="left:641px;top:272px;width:12px;height:11px;border:1px solid #888;border-radius:2px;background:#fff"></div>
<div class="t c" style="left:659px;top:271px">柜台</div>
<div class="t c" style="left:668px;top:290px">米黄大理石</div>
<div class="t" style="left:668px;top:308px">EP-4 <span class="c">乳胶漆</span></div>
<div class="t c" style="left:668px;top:327px">同办公家具色防火胶板</div>
<div class="t" style="left:668px;top:346px">12mm<span class="c">木工板</span></div>
<div class="t" style="left:668px;top:364px">20mm<span class="c">木工板</span>-1</div>
<div class="tri" style="left:630px;top:388px;border-top-color:#777"></div>
<div class="a" style="left:641px;top:383px;width:12px;height:11px;border:1px solid #888;border-radius:2px;background:#fff"></div>
<div class="t c" style="left:659px;top:382px">浅色图案</div>
<div class="t c" style="left:668px;top:401px">浅色图案</div>
<div class="tri" style="left:630px;top:425px;border-top-color:#777"></div>
<div class="a" style="left:641px;top:420px;width:12px;height:11px;border:1px solid #888;border-radius:2px;background:#fff"></div>
<div class="t c" style="left:659px;top:419px">深色图案</div>
<div class="t c" style="left:668px;top:438px">深色图案</div>
<div class="tri" style="left:630px;top:462px;border-top-color:#777"></div>
<div class="a" style="left:641px;top:457px;width:12px;height:11px;border:1px solid #888;border-radius:2px;background:#fff"></div>
<div class="t c" style="left:659px;top:456px">乳胶漆墙面</div>
<div class="t c" style="left:668px;top:475px">乳胶漆墙面</div>
<div class="tri" style="left:630px;top:499px;border-top-color:#777"></div>
<div class="a" style="left:641px;top:494px;width:12px;height:11px;border:1px solid #888;border-radius:2px;background:#fff"></div>
<div class="t" style="left:659px;top:493px">QM-1</div>
<div class="t" style="left:668px;top:512px">MC-1</div>
<div class="tri" style="left:613px;top:536px;border-top-color:#777"></div>
<div class="t c" style="left:624px;top:530px">踢脚</div>
<svg style="left:641px;top:550px" width="12" height="11" viewBox="0 0 12 11"><rect width="12" height="11" rx="2" fill="#1f7fe5"/><path d="M2.5 5.5 L5 8 L9.5 3" stroke="#fff" stroke-width="1.6" fill="none"/></svg>
<div class="t c" style="left:659px;top:549px">踢脚线</div>
<!-- bottom inputs -->
<div class="t" style="left:600px;top:584px"><span class="c">吊顶高度</span>(mm):</div>
<div class="a" style="left:676px;top:582px;width:35px;height:18px;background:#fff;border:1px solid #e2e2e2;border-radius:3px"></div>
<div class="t" style="left:680px;top:585px">2700</div>
<div class="t" style="left:720px;top:584px"><span class="c">墙面高度</span>(mm):</div>
<div class="a" style="left:798px;top:582px;width:48px;height:18px;background:#fff;border:1px solid #e2e2e2;border-radius:3px"></div>
<div class="t c" style="left:802px;top:585px">同吊顶</div>
<div class="tri" style="left:837px;top:590px;border-left-width:2px;border-right-width:2px;border-top-width:3px"></div>
<div class="t" style="left:855px;top:584px"><span class="c">面式踢脚高度</span>(mm):</div>
<div class="a" style="left:951px;top:582px;width:28px;height:18px;background:#fff;border:1px solid #e2e2e2;border-radius:3px"></div>
<div class="t" style="left:954px;top:585px">150</div>
<div class="a" style="left:843px;top:611px;width:67px;height:20px;background:#1f86ee;border-radius:3px"></div>
<div class="t c" style="left:867px;top:615px;color:#fff">确定</div>
<div class="a" style="left:915px;top:611px;width:64px;height:20px;background:#fff;border:1px solid #dcdcdc;border-radius:3px"></div>
<div class="t c" style="left:937px;top:615px">取消</div>
<svg style="left:978px;top:627px" width="8" height="8" viewBox="0 0 8 8" fill="#888"><rect x="6" y="0" width="1.2" height="1.2"/><rect x="6" y="3" width="1.2" height="1.2"/><rect x="3" y="3" width="1.2" height="1.2"/><rect x="6" y="6" width="1.2" height="1.2"/><rect x="3" y="6" width="1.2" height="1.2"/><rect x="0" y="6" width="1.2" height="1.2"/></svg>
<!-- cursor -->
<svg style="left:862px;top:613px" width="12" height="18" viewBox="0 0 12 18"><path d="M1 1 L1 15 L4.5 11.5 L7 17 L9 16 L6.5 10.5 L11 10.5Z" fill="#fff" stroke="#222" stroke-width="1"/></svg>

<!-- video timestamp -->
<div class="a" style="left:172px;top:739px;width:54px;height:14px;background:#555;border-radius:3px;opacity:.9"></div>
<div class="t" style="left:176px;top:739px;color:#eee;font-size:10px">00:00:41</div>

<script>
(function(){var s=document.createElement('span');s.style.cssText='position:absolute;left:-9999px;top:0;font-family:"Liberation Sans",sans-serif;font-size:100px;white-space:nowrap;letter-spacing:0';s.textContent='\u56fd\u56fd';document.body.appendChild(s);var w=s.getBoundingClientRect().width;document.body.removeChild(s);if(w>170){document.body.className+=' cjk';}})();
</script>
</body></html>
